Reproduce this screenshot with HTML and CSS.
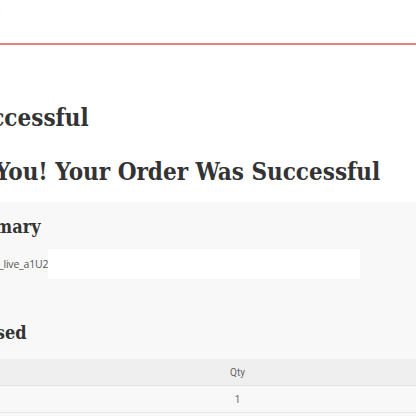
FILE: index.html
```html
<!DOCTYPE html>
<html>
<head>
<meta charset="utf-8">
<link rel="stylesheet" href="styles.css">
</head>
<body>
<header class="topbar"><span class="brand">i</span></header>
<main class="page">
  <h1 class="title">Order Successful</h1>
  <h2 class="thanks">Thank You! Your Order Was Successful</h2>
</main>
<section class="panel">
  <div class="panel-inner">
    <h3 class="sec">Order Summary</h3>
    <div class="idrow"><span class="idtext">Session ID: cs_live_a1U2</span><span class="idbox"></span></div>
    <h3 class="sec sec2">Items Purchased</h3>
    <table class="items">
      <thead><tr><th class="c-prod">Product</th><th class="c-qty">Qty</th></tr></thead>
      <tbody><tr><td class="c-prod">Item</td><td class="c-qty">1</td></tr></tbody>
    </table>
  </div>
</section>
</body>
</html>
```
FILE: styles.css
```css
html, body { margin: 0; padding: 0; background: #fff; overflow: hidden; }
body { width: 416px; height: 416px; font-family: "Open Sans", "Liberation Sans", sans-serif; color: #333; }
.topbar { height: 43px; border-bottom: 2px solid #e58080; box-sizing: content-box; display: flex; align-items: flex-start; }
.brand { color: #bbb; font-size: 10px; margin-left: -2px; margin-top: 9px; line-height: 10px; }
.page { margin-left: -118px; padding-top: 58px; white-space: nowrap; }
.title { font-family: "DejaVu Serif Condensed", "DejaVu Serif", serif; font-weight: bold; font-size: 24px; line-height: 30px; margin: 0; color: #333; white-space: nowrap; }
.thanks { font-family: "DejaVu Serif Condensed", "DejaVu Serif", serif; font-weight: bold; font-size: 24px; line-height: 32px; margin: 23px 0 0 29px; color: #333; white-space: nowrap; }
.panel { background: #f8f8f8; margin-top: 14px; height: 300px; }
.panel-inner { margin-left: -104px; padding-top: 13px; white-space: nowrap; }
.sec { font-family: "DejaVu Serif Condensed", "DejaVu Serif", serif; font-weight: bold; font-size: 18px; line-height: 24px; margin: 0; color: #333; }
.sec2 { margin-top: 42px; margin-left: -22px; }
.idrow { display: flex; align-items: center; margin-top: 10px; margin-left: 40px; height: 30px; }
.idtext { font-size: 10.5px; color: #555; letter-spacing: -0.2px; }
.idbox { width: 312px; height: 30px; background: #fff; }
.items { border-collapse: collapse; width: 521px; margin-top: 14px; font-family: Roboto, "Liberation Sans", sans-serif; font-size: 10px; color: #666; }
.items th { background: #efefef; font-weight: normal; height: 24px; border-bottom: 1px solid #e2e2e2; }
.items td { height: 24px; border-bottom: 1px solid #e6e6e6; color: #6a6a6a; }
.c-prod { width: 161px; }
.c-qty { width: 360px; text-align: center; }
```
